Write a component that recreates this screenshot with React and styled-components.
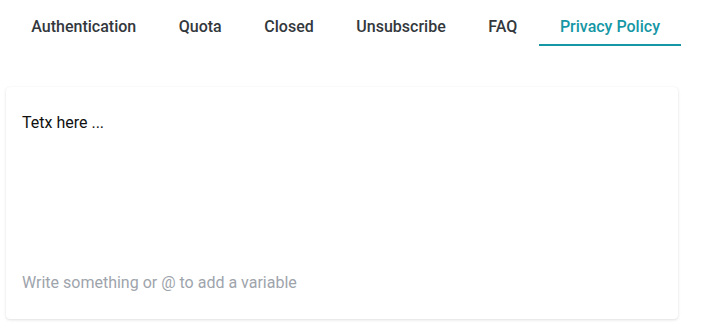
import React from "react";
import styled, { createGlobalStyle } from "styled-components";

const tabs = ["Authentication", "Quota", "Closed", "Unsubscribe", "FAQ", "Privacy Policy"];

const App = () => {
  return (
    <Page>
      <GlobalStyle />
      <TabBar>
        {tabs.map((t) => (
          <Tab key={t} $active={t === "Privacy Policy"}>
            {t}
          </Tab>
        ))}
      </TabBar>
      <Card>
        <Content>Tetx here ...</Content>
        <Placeholder>Write something or @ to add a variable</Placeholder>
      </Card>
    </Page>
  );
};

// Styles
const GlobalStyle = createGlobalStyle`
  body {
    margin: 0;
    background: #ffffff;
    font-family: Roboto, "Liberation Sans", sans-serif;
  }
`;

const Page = styled.div`
  width: 705px;
  height: 333px;
  padding: 0 27px 0 6px;
  box-sizing: border-box;
  display: flex;
  flex-direction: column;
`;

const TabBar = styled.div`
  display: flex;
  padding-left: 4px;
`;

const Tab = styled.div`
  flex-shrink: 0;
  white-space: nowrap;
  padding: 17px 21.3px 8px;
  line-height: 19px;
  font-size: 16px;
  font-weight: 500;
  color: ${(p) => (p.$active ? "#1597a5" : "#33383d")};
  border-bottom: 2px solid ${(p) => (p.$active ? "#1597a5" : "transparent")};
  cursor: pointer;
`;

const Card = styled.div`
  margin-top: 41px;
  height: 232px;
  box-sizing: border-box;
  padding: 24px 16px 16px;
  border-radius: 4px;
  background: #ffffff;
  box-shadow: 0 1px 3px rgba(0, 0, 0, 0.12), 0 0 1px rgba(0, 0, 0, 0.06);
  display: flex;
  flex-direction: column;
  justify-content: space-between;
`;

const Content = styled.div`
  font-size: 16px;
  line-height: 24px;
  color: #111111;
`;

const Placeholder = styled.div`
  font-size: 16px;
  line-height: 22px;
  color: #9ea4ac;
  padding-bottom: 9px;
`;

export default App;
